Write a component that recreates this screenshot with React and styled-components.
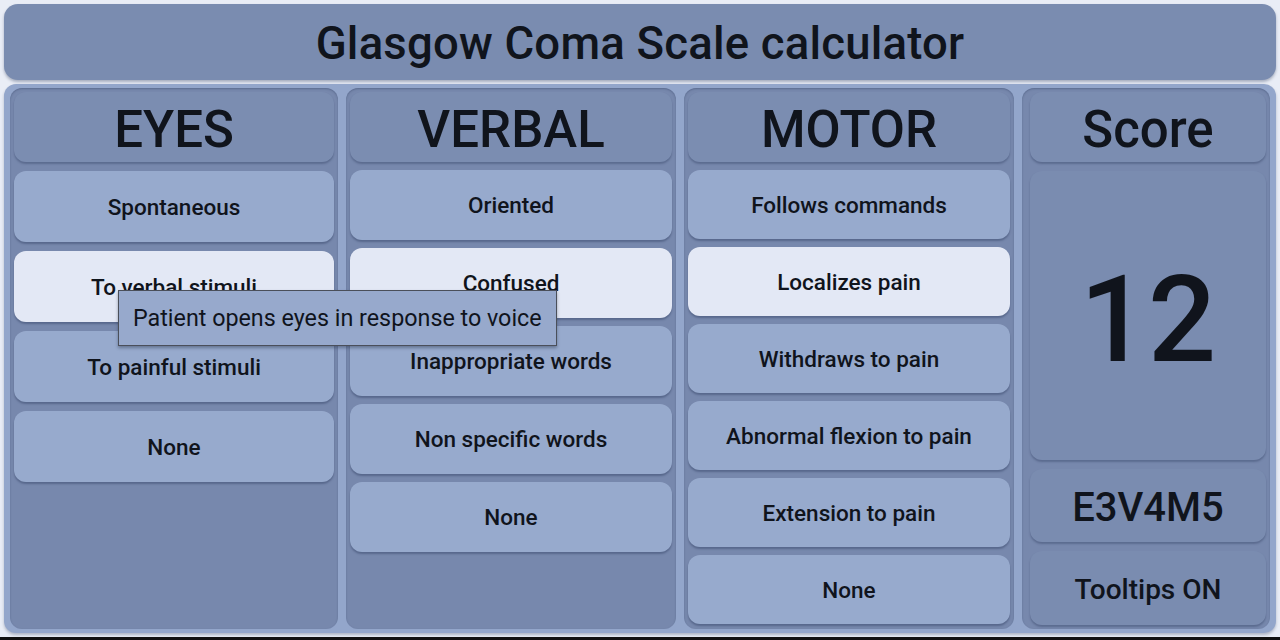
import styled, { createGlobalStyle } from 'styled-components'

const GlobalStyle = createGlobalStyle`
  html, body {
    margin: 0;
    padding: 0;
    background: #e9edf6;
    font-family: Roboto, "Noto Sans", "Liberation Sans", sans-serif;
    color: #10141c;
  }
`

const columns = [
    {
        title: 'EYES',
        width: 328,
        rowHeight: 71,
        gap: 9,
        options: ['Spontaneous', 'To verbal stimuli', 'To painful stimuli', 'None'],
        selected: 1,
        tooltip: 'Patient opens eyes in response to voice',
    },
    {
        title: 'VERBAL',
        width: 330,
        rowHeight: 70,
        gap: 8,
        options: ['Oriented', 'Confused', 'Inappropriate words', 'Non specific words', 'None'],
        selected: 1,
    },
    {
        title: 'MOTOR',
        width: 330,
        rowHeight: 69,
        gap: 8,
        options: ['Follows commands', 'Localizes pain', 'Withdraws to pain', 'Abnormal flexion to pain', 'Extension to pain', 'None'],
        selected: 1,
    },
]

const App = () => {
    return (
        <>
            <GlobalStyle />
            <Page>
                <TitleBar>Glasgow Coma Scale calculator</TitleBar>
                <Board>
                    {columns.map((col) => (
                        <Column key={col.title} $width={col.width} $gap={col.gap}>
                            <Header>{col.title}</Header>
                            {col.options.map((opt, idx) => (
                                <Option key={opt} $height={col.rowHeight} $selected={idx === col.selected}>
                                    {opt}
                                    {col.tooltip && idx === col.selected ? <Tooltip>{col.tooltip}</Tooltip> : null}
                                </Option>
                            ))}
                        </Column>
                    ))}
                    <ScoreColumn>
                        <Header>Score</Header>
                        <ScoreBox>12</ScoreBox>
                        <CodeBox>E3V4M5</CodeBox>
                        <ToggleBox>Tooltips ON</ToggleBox>
                    </ScoreColumn>
                </Board>
                <NavStrip />
            </Page>
        </>
    )
}

const Page = styled.div`
    height: 640px;
    box-sizing: border-box;
    padding: 4px 4px 0;
    display: flex;
    flex-direction: column;
    gap: 4px;
    overflow: hidden;
`

const TitleBar = styled.div`
    height: 76px;
    box-sizing: border-box;
    padding-top: 3px;
    flex-shrink: 0;
    background: #7a8cb0;
    border-radius: 14px;
    box-shadow: 0 2px 3px rgba(40, 55, 90, 0.35);
    display: flex;
    align-items: center;
    justify-content: center;
    font-size: 45.5px;
    font-weight: 500;
    letter-spacing: 0.2px;
`

const Board = styled.div`
    flex: 1;
    background: #93a6cb;
    border-radius: 12px;
    padding: 4px 6px 4px 6px;
    display: flex;
    gap: 8px;
    box-shadow: 0 2px 3px rgba(40, 55, 90, 0.3);
    min-height: 0;
`

const Column = styled.div`
    flex: 0 0 ${(p) => p.$width || 330}px;
    box-sizing: border-box;
    background: #7788ad;
    border-radius: 12px;
    padding: 4px;
    display: flex;
    flex-direction: column;
    gap: ${(p) => p.$gap}px;
    box-shadow: inset 0 1px 2px rgba(40, 55, 90, 0.35);
    position: relative;
`

const Header = styled.div`
    height: 70px;
    box-sizing: border-box;
    padding-top: 5px;
    flex-shrink: 0;
    background: #7b8db1;
    border-radius: 12px;
    box-shadow: 0 2px 2px rgba(40, 55, 90, 0.35);
    display: flex;
    align-items: center;
    justify-content: center;
    font-size: 51px;
    font-weight: 500;
`

const Option = styled.div`
    position: relative;
    height: ${(p) => p.$height}px;
    flex-shrink: 0;
    background: ${(p) => (p.$selected ? '#e3e8f5' : '#97aacd')};
    border-radius: 12px;
    box-shadow: 0 2px 2px rgba(40, 55, 90, 0.4);
    display: flex;
    align-items: center;
    justify-content: center;
    font-size: 22.5px;
    font-weight: 500;
`

const Tooltip = styled.div`
    position: absolute;
    left: 104px;
    top: 39px;
    z-index: 5;
    white-space: nowrap;
    box-sizing: border-box;
    height: 56px;
    padding: 0 14px;
    display: flex;
    align-items: center;
    background: #97a9cc;
    border: 1px solid #4a4f5a;
    box-shadow: 0 2px 3px rgba(30, 40, 60, 0.4);
    font-size: 23.3px;
    font-weight: 400;
`

const ScoreColumn = styled(Column)`
    flex: 1 1 auto;
    padding: 4px 4px 4px 8px;
    gap: 9px;
`

const ScoreBox = styled.div`
    flex: 1;
    box-sizing: border-box;
    padding-top: 8px;
    background: #7a8cb0;
    border-radius: 12px;
    box-shadow: 0 2px 2px rgba(40, 55, 90, 0.35);
    display: flex;
    align-items: center;
    justify-content: center;
    font-size: 120px;
    font-weight: 500;
`

const CodeBox = styled(ScoreBox)`
    flex: 0 0 73px;
    padding-top: 4px;
    font-size: 40px;
`

const ToggleBox = styled(ScoreBox)`
    flex: 0 0 74px;
    padding-top: 2px;
    font-size: 28px;
`

const NavStrip = styled.div`
    height: 3px;
    flex-shrink: 0;
    background: #111;
    margin: 0 -4px;
`

export default App
